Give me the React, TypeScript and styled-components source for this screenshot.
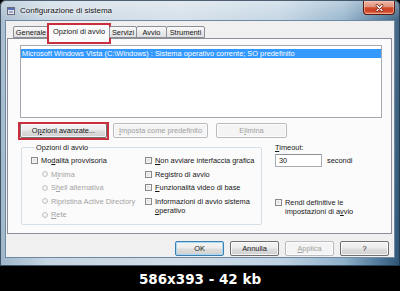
import React from 'react';
import styled, { createGlobalStyle } from 'styled-components';

const GlobalStyle = createGlobalStyle`
  html, body {
    margin: 0;
    padding: 0;
    background: #000;
  }
  body {
    width: 400px;
    height: 291px;
    overflow: hidden;
    font-family: "Liberation Sans", Arial, sans-serif;
    font-size: 7.4px;
    color: #161616;
  }
`;

const Page = styled.div`
  width: 400px;
  height: 291px;
  display: flex;
  flex-direction: column;
`;

const Window = styled.div`
  box-sizing: border-box;
  width: 400px;
  height: 266px;
  padding: 0 5px 8px 5px;
  display: flex;
  flex-direction: column;
  border-radius: 6px 6px 0 0;
  background:
    linear-gradient(180deg, rgba(255, 255, 255, 0.4) 0px, rgba(255, 255, 255, 0.1) 20px, rgba(255, 255, 255, 0) 100%),
    linear-gradient(90deg, #9fb6ca 0%, #c6d5e2 12%, #d2dde7 45%, #bfd2e2 70%, #8fb0c9 86%, #4d7799 95%, #2c5373 100%);
  box-shadow: inset 0 0 0 1px rgba(30, 50, 70, 0.75);
`;

const TitleBar = styled.div`
  height: 20px;
  flex: none;
  display: flex;
  align-items: center;
  padding-left: 2px;
`;

const AppIcon = () => (
  <svg width="8" height="8" viewBox="0 0 8 8" style={{ flex: 'none', marginTop: 2 }}>
    <rect x="0.5" y="0.5" width="7" height="7" fill="#e8e8ee" stroke="#6a6a7a" />
    <rect x="1" y="1" width="6" height="2" fill="#5a6fb8" />
    <rect x="2" y="4" width="4" height="2" fill="#9aa6c8" />
  </svg>
);

const Title = styled.span`
  margin-left: 5px;
  font-size: 8px;
  color: #111;
  text-shadow: 0 0 5px rgba(255, 255, 255, 0.95), 0 0 2px rgba(255, 255, 255, 0.9);
`;

const CloseButton = styled.div`
  margin-left: auto;
  align-self: flex-start;
  margin-top: 1px;
  width: 32px;
  height: 14px;
  box-sizing: border-box;
  border: 1px solid #5a1a14;
  border-top: none;
  border-radius: 0 0 4px 4px;
  background: linear-gradient(180deg, #f0b8a6 0%, #e0907a 45%, #d04a2c 52%, #cf4224 78%, #e88660 100%);
  box-shadow: inset 0 0 0 1px rgba(255, 210, 190, 0.5);
  display: flex;
  align-items: center;
  justify-content: center;
`;

const CloseGlyph = () => (
  <svg width="9" height="8" viewBox="0 0 9 8">
    <path d="M2 1.5 L7 6.5 M7 1.5 L2 6.5" stroke="#6a1e12" strokeWidth="2.6" strokeLinecap="round" />
    <path d="M2 1.5 L7 6.5 M7 1.5 L2 6.5" stroke="#fff" strokeWidth="1.4" strokeLinecap="round" />
  </svg>
);

const Client = styled.div`
  flex: 1;
  box-sizing: border-box;
  background: #f0f0f0;
  border: 1px solid #6f89a3;
  padding-top: 3px;
  display: flex;
  flex-direction: column;
`;

const TabStrip = styled.div`
  position: relative;
  z-index: 1;
  height: 14px;
  display: flex;
  align-items: flex-end;
  padding-left: 7px;
`;

const Tab = styled.div<{ $w: number; $active?: boolean; $marked?: boolean }>`
  position: relative;
  box-sizing: border-box;
  width: ${p => p.$w}px;
  height: ${p => (p.$active ? 15 : 12)}px;
  margin-bottom: ${p => (p.$active ? -1 : 0)}px;
  border: 1px solid #8c8f97;
  border-bottom: ${p => (p.$active ? 'none' : '1px solid #8c8f97')};
  margin-right: -1px;
  border-radius: 2px 2px 0 0;
  background: ${p => (p.$active ? '#fbfbfb' : 'linear-gradient(180deg, #fafafa 0%, #ececec 50%, #e0e0e0 100%)')};
  display: flex;
  align-items: center;
  justify-content: center;
  padding-bottom: ${p => (p.$active ? 2 : 0)}px;
  white-space: nowrap;

  &::after {
    content: '';
    display: ${p => (p.$marked ? 'block' : 'none')};
    position: absolute;
    left: -2px;
    right: -2px;
    top: -2px;
    bottom: -5px;
    border: 2px solid #c8303f;
  }
`;

const TabPanel = styled.div`
  box-sizing: border-box;
  height: 196px;
  margin: 0 2px 0 1px;
  border: 1px solid #8c8f97;
  background: #fbfbfb;
  padding: 6px 9px 0 12px;
  display: flex;
  flex-direction: column;
`;

const ListBox = styled.div`
  box-sizing: border-box;
  height: 73px;
  border: 1px solid #a4a8b0;
  background: #fff;
  padding-top: 3px;
`;

const ListItem = styled.div<{ $selected?: boolean }>`
  height: 9px;
  line-height: 9px;
  padding-left: 1px;
  white-space: nowrap;
  color: ${p => (p.$selected ? '#fff' : '#161616')};
  background: ${p => (p.$selected ? '#3399ff' : 'transparent')};
`;

const ButtonRow = styled.div`
  display: flex;
  margin-top: 5px;
`;

const Button = styled.div<{ $w: number; $gap?: number; $disabled?: boolean; $default?: boolean; $marked?: boolean }>`
  position: relative;
  box-sizing: border-box;
  width: ${p => p.$w}px;
  height: 15px;
  margin-right: ${p => p.$gap ?? 0}px;
  border-radius: 2px;
  border: 1px solid ${p => (p.$disabled ? '#b8bcc0' : p.$default ? '#3c7fb1' : '#707070')};
  background: ${p =>
    p.$disabled
      ? '#f4f4f4'
      : 'linear-gradient(180deg, #f4f4f4 0%, #ececec 48%, #dedede 52%, #d0d0d0 100%)'};
  box-shadow: inset 0 0 0 1px ${p => (p.$default ? 'rgba(160, 215, 245, 0.9)' : 'rgba(255, 255, 255, 0.75)')};
  color: ${p => (p.$disabled ? '#a0a0a0' : '#161616')};
  display: flex;
  align-items: center;
  justify-content: center;
  white-space: nowrap;

  &::after {
    content: '';
    display: ${p => (p.$marked ? 'block' : 'none')};
    position: absolute;
    left: -3px;
    right: -3px;
    top: -2px;
    bottom: -3px;
    border: 2px solid #c8303f;
  }
`;

const OptionsArea = styled.div`
  display: flex;
  margin-top: 5px;
`;

const GroupBox = styled.fieldset`
  box-sizing: border-box;
  width: 241px;
  height: 82px;
  margin: 0 0 0 1px;
  padding: 2px 0 0 9px;
  border: 1px solid #d5dfe5;
  border-radius: 2px;
  min-width: 0;
  display: grid;
  grid-template-columns: 114px 1fr;
  align-content: start;
`;

const Legend = styled.legend`
  padding: 0 1px;
  margin-left: 4px;
  line-height: 9px;
`;

const Column = styled.div`
  display: flex;
  flex-direction: column;
`;

const OptionRow = styled.div<{ $indent?: number; $disabled?: boolean }>`
  min-height: 13.5px;
  box-sizing: border-box;
  display: flex;
  align-items: flex-start;
  gap: 3px;
  padding-top: 2.25px;
  padding-left: ${p => p.$indent ?? 0}px;
  color: ${p => (p.$disabled ? '#a3a3a3' : '#161616')};
  line-height: 9px;
  white-space: nowrap;
`;

const CheckBox = styled.span`
  flex: none;
  width: 7px;
  height: 7px;
  margin-top: 1px;
  box-sizing: border-box;
  border: 1px solid #8a8a8a;
  background: linear-gradient(135deg, #d2d2d2 0%, #ececec 60%, #fafafa 100%);
  box-shadow: inset 0 0 0 1px #f2f2f2;
`;

const Radio = styled.span`
  flex: none;
  width: 6px;
  height: 6px;
  margin: 1.5px 0 0 0;
  box-sizing: border-box;
  border-radius: 50%;
  border: 1px solid #c4c4c4;
  background: radial-gradient(circle at 40% 40%, #fafafa 0%, #e6e6e6 100%);
`;

const Key = styled.u`
  text-decoration: underline;
  text-underline-offset: 1px;
`;

const TimeoutColumn = styled.div`
  display: flex;
  flex-direction: column;
  margin-left: 13px;
`;

const FieldLabel = styled.div`
  line-height: 9px;
`;

const InputRow = styled.div`
  display: flex;
  align-items: center;
  gap: 5px;
  margin-top: 2px;
`;

const TextInput = styled.div`
  box-sizing: border-box;
  width: 47px;
  height: 13px;
  border: 1px solid #abadb3;
  border-top-color: #8e9197;
  background: #fff;
  padding-left: 3px;
  display: flex;
  align-items: center;
`;

const PersistRow = styled(OptionRow)`
  margin-top: 29px;
`;

const DialogButtons = styled.div`
  display: flex;
  justify-content: flex-end;
  gap: 6px;
  margin-top: 7px;
  padding-right: 5px;
`;

const Caption = styled.div`
  height: 25px;
  line-height: 26px;
  text-align: center;
  color: #fff;
  font-family: "DejaVu Sans", Verdana, sans-serif;
  font-weight: bold;
  font-size: 13.5px;
`;

const tabs = [
  { label: 'Generale', w: 36 },
  { label: 'Opzioni di avvio', w: 62, active: true },
  { label: 'Servizi', w: 28 },
  { label: 'Avvio', w: 31 },
  { label: 'Strumenti', w: 39 },
];

export default function App() {
  return (
    <Page>
      <GlobalStyle />
      <Window>
        <TitleBar>
          <AppIcon />
          <Title>Configurazione di sistema</Title>
          <CloseButton>
            <CloseGlyph />
          </CloseButton>
        </TitleBar>
        <Client>
          <TabStrip>
            {tabs.map(t => (
              <Tab key={t.label} $w={t.w} $active={t.active} $marked={t.active}>
                {t.label}
              </Tab>
            ))}
          </TabStrip>
          <TabPanel>
            <ListBox>
              <ListItem $selected>
                {'Microsoft Windows Vista (C:\\Windows) : Sistema operativo corrente; SO predefinito'}
              </ListItem>
            </ListBox>
            <ButtonRow>
              <Button $w={87} $gap={6} $marked>
                O<Key>p</Key>zioni avanzate...
              </Button>
              <Button $w={95} $gap={8} $disabled>
                <Key>I</Key>mposta come predefinito
              </Button>
              <Button $w={71} $disabled>
                E<Key>l</Key>imina
              </Button>
            </ButtonRow>
            <OptionsArea>
              <GroupBox>
                <Legend>Opzioni di avvio</Legend>
                <Column>
                  <OptionRow>
                    <CheckBox />
                    <span>
                      Mo<Key>d</Key>alità provvisoria
                    </span>
                  </OptionRow>
                  <OptionRow $indent={11} $disabled>
                    <Radio />
                    <span>
                      M<Key>i</Key>nima
                    </span>
                  </OptionRow>
                  <OptionRow $indent={11} $disabled>
                    <Radio />
                    <span>
                      S<Key>h</Key>ell alternativa
                    </span>
                  </OptionRow>
                  <OptionRow $indent={11} $disabled>
                    <Radio />
                    <span>Ripristina Active Directory</span>
                  </OptionRow>
                  <OptionRow $indent={11} $disabled>
                    <Radio />
                    <span>
                      <Key>R</Key>ete
                    </span>
                  </OptionRow>
                </Column>
                <Column>
                  <OptionRow>
                    <CheckBox />
                    <span>
                      <Key>N</Key>on avviare interfaccia grafica
                    </span>
                  </OptionRow>
                  <OptionRow>
                    <CheckBox />
                    <span>Registro di avvio</span>
                  </OptionRow>
                  <OptionRow>
                    <CheckBox />
                    <span>
                      <Key>F</Key>unzionalità video di base
                    </span>
                  </OptionRow>
                  <OptionRow>
                    <CheckBox />
                    <span>
                      Informazioni di avvio sistema
                      <br />
                      <Key>o</Key>perativo
                    </span>
                  </OptionRow>
                </Column>
              </GroupBox>
              <TimeoutColumn>
                <FieldLabel>
                  <Key>T</Key>imeout:
                </FieldLabel>
                <InputRow>
                  <TextInput>30</TextInput>
                  <span>secondi</span>
                </InputRow>
                <PersistRow>
                  <CheckBox />
                  <span>
                    Rendi definitive le
                    <br />
                    impostazioni di a<Key>v</Key>vio
                  </span>
                </PersistRow>
              </TimeoutColumn>
            </OptionsArea>
          </TabPanel>
          <DialogButtons>
            <Button $w={49} $default>
              OK
            </Button>
            <Button $w={49}>Annulla</Button>
            <Button $w={49} $disabled>
              <Key>A</Key>pplica
            </Button>
            <Button $w={49}>?</Button>
          </DialogButtons>
        </Client>
      </Window>
      <Caption>586x393 - 42 kb</Caption>
    </Page>
  );
}
